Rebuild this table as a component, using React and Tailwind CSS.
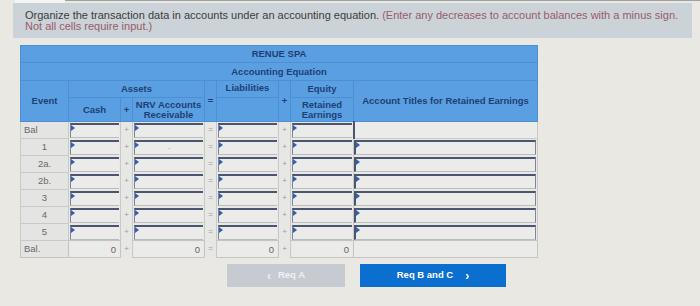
import React from 'react'

const rows = ['Bal', '1', '2a', '2b', '3', '4', '5']

function Flag() {
  return (
    <span className="absolute left-0 top-0 w-0 h-0 border-y-[3px] border-y-transparent border-l-[4px] border-l-[#2f5fae]" />
  )
}

function InputCell({ note }) {
  return (
    <td className="px-[1px] pt-[1px] pb-0 border-x border-[#c9c9c7]">
      <div className="relative h-[15px] bg-[#ebebe9] border-t-2 border-t-[#4a5572] border-l border-l-[#7d8597] border-b border-b-[#b9bcc0] flex items-center justify-center">
        <Flag />
        {note && <span className="text-[8px] text-[#aaa] leading-none">{note}</span>}
      </div>
    </td>
  )
}

function OpCell({ op }) {
  return (
    <td className="text-center text-[8px] text-[#9a9a9a] bg-[#e7e7e5] border-x border-[#c9c9c7] align-middle">
      {op}
    </td>
  )
}

function TotalCell() {
  return (
    <td className="px-[1px] border border-[#c4c4c2]">
      <div className="h-[15px] bg-[#ebebe9] text-right pr-[3px] text-[9.5px] leading-[15px] text-[#666]">0</div>
    </td>
  )
}

export default function App() {
  const hd = 'text-[#1d3f75] font-bold text-[9.5px] leading-[10px] text-center'
  const hb = 'border border-[#4d8fd3]'

  return (
    <div className="w-[700px] h-[306px] bg-[#e9e8e3] overflow-hidden" style={{ fontFamily: '"Liberation Sans", Arial, sans-serif' }}>
      {/* tabs strip */}
      <div className="h-[3px] flex">
        <div className="w-[15px]" />
        <div className="w-[50px] bg-[#f4f4f2]" />
        <div className="flex-1 bg-[#9aa0a6] h-[1px]" />
      </div>

      {/* instructions */}
      <div className="ml-[13px] w-[679px] h-[35px] bg-[#cbd3d8] pl-[12px] pt-[7px] text-[11px] leading-[11px] text-[#3c3c3c]">
        Organize the transaction data in accounts under an accounting equation.{' '}
        <span className="text-[#9a5a6c]">(Enter any decreases to account balances with a minus sign.</span>
        <br />
        <span className="text-[#9a5a6c]">Not all cells require input.)</span>
      </div>

      {/* table */}
      <table className="ml-[20px] mt-[7px] w-[517px] table-fixed border-collapse">
        <colgroup>
          <col className="w-[48px]" />
          <col className="w-[52px]" />
          <col className="w-[12px]" />
          <col className="w-[72px]" />
          <col className="w-[12px]" />
          <col className="w-[62px]" />
          <col className="w-[12px]" />
          <col className="w-[63px]" />
          <col className="w-[184px]" />
        </colgroup>
        <thead className="bg-[#5a9fe2]">
          <tr className="h-[17px]">
            <th colSpan={9} className={`${hd} ${hb}`}>RENUE SPA</th>
          </tr>
          <tr className="h-[18px]">
            <th colSpan={9} className={`${hd} ${hb}`}>Accounting Equation</th>
          </tr>
          <tr className="h-[17px]">
            <th rowSpan={2} className={`${hd} ${hb}`}>Event</th>
            <th colSpan={3} className={`${hd} ${hb}`}>Assets</th>
            <th rowSpan={2} className={`${hd} ${hb} align-middle`}>=</th>
            <th className={`${hd} ${hb} align-top pt-[2px]`}>Liabilities</th>
            <th rowSpan={2} className={`${hd} ${hb}`}>+</th>
            <th className={`${hd} ${hb}`}>Equity</th>
            <th rowSpan={2} className={`${hd} ${hb}`}>Account Titles for Retained Earnings</th>
          </tr>
          <tr className="h-[24px]">
            <th className={`${hd} ${hb}`}>Cash</th>
            <th className={`${hd} ${hb}`}>+</th>
            <th className={`${hd} ${hb}`}>NRV Accounts Receivable</th>
            <th className={`${hd} ${hb}`} />
            <th className={`${hd} ${hb}`}>Retained Earnings</th>
          </tr>
        </thead>
        <tbody>
          {rows.map((r, i) => (
            <tr key={r} className="h-[17px]">
              <td
                className={`bg-[#e4e4e2] border border-[#c9c9c7] text-[9.5px] text-[#6a6a6a] leading-none ${
                  i === 0 ? 'text-left pl-[3px]' : 'text-center'
                }`}
              >
                {r === '2a' || r === '2b' ? r + '.' : r}
              </td>
              <InputCell />
              <OpCell op="+" />
              <InputCell note={i === 1 ? '-' : null} />
              <OpCell op="=" />
              <InputCell />
              <OpCell op="+" />
              <InputCell />
              {i === 0 ? (
                <td className="border border-[#c9c9c7] bg-[#ebebe9] border-l-2 border-l-[#4a5572]" />
              ) : (
                <td className="pr-[1px] pt-[1px] border-r border-[#c9c9c7]">
                  <div className="relative h-[15px] bg-[#ebebe9] border-t-2 border-t-[#4a5572] border-l-2 border-l-[#4a5572] border-r border-r-[#7d8597] border-b border-b-[#b9bcc0]">
                    <Flag />
                  </div>
                </td>
              )}
            </tr>
          ))}
          <tr className="h-[17px]">
            <td className="bg-[#e4e4e2] border border-[#c4c4c2] text-[9.5px] text-[#6a6a6a] pl-[3px]">Bal.</td>
            <TotalCell />
            <OpCell op="+" />
            <TotalCell />
            <OpCell op="=" />
            <TotalCell />
            <OpCell op="+" />
            <TotalCell />
            <td className="border border-[#c4c4c2] bg-[#ebebe9]" />
          </tr>
        </tbody>
      </table>

      {/* nav buttons */}
      <div className="flex gap-[15px] ml-[227px] mt-[6px]">
        <button className="w-[118px] h-[23px] bg-[#c6cbd2] text-[#eef1f5] text-[9.5px] font-bold flex items-center justify-center gap-[7px]">
          <span className="text-[12px] leading-none">&lsaquo;</span>
          <span>Req A</span>
        </button>
        <button className="w-[146px] h-[23px] bg-[#0b6fd0] text-white text-[9.5px] font-bold flex items-center justify-center gap-[12px]">
          <span>Req B and C</span>
          <span className="text-[12px] leading-none">&rsaquo;</span>
        </button>
      </div>
    </div>
  )
}
